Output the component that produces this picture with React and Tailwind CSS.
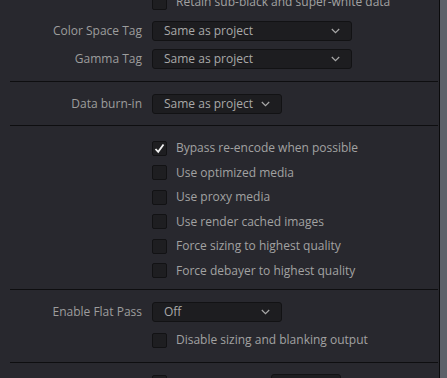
import React from "react";

const font = { fontFamily: '"Open Sans", "Noto Sans", sans-serif' };

function Chevron() {
  return (
    <svg width="9" height="6" viewBox="0 0 9 6" className="shrink-0">
      <path d="M0.8 1 L4.5 4.6 L8.2 1" fill="none" stroke="#a8a8a8" strokeWidth="1.2" />
    </svg>
  );
}

function Dropdown({ value, wide }) {
  return (
    <div
      className={`flex items-center justify-between h-[20px] pl-[11px] pr-[11px] rounded-[3px] border border-[#121214] bg-[#1d1d20] text-[#a9a9a9] text-[12px] ${
        wide ? "w-[200px]" : "w-[130px]"
      }`}
    >
      <span className="leading-none">{value}</span>
      <Chevron />
    </div>
  );
}

function Box({ checked }) {
  return (
    <div className="w-[15px] h-[15px] shrink-0 rounded-[2px] border border-[#121214] bg-[#1e1e21] flex items-center justify-center">
      {checked && (
        <svg width="11" height="11" viewBox="0 0 11 11">
          <path d="M1.5 6 L4.2 8.8 L9.5 1.5" fill="none" stroke="#f2f2f2" strokeWidth="1.8" />
        </svg>
      )}
    </div>
  );
}

function FieldRow({ label, children, h = "h-[28px]" }) {
  return (
    <div className={`flex items-center ${h}`}>
      <div className="w-[142px] pr-0 text-right text-[12px] text-[#9d9d9d] shrink-0">{label}</div>
      <div className="ml-[10px]">{children}</div>
    </div>
  );
}

function CheckRow({ label, checked, h = "h-[24.5px]" }) {
  return (
    <div className={`flex items-center ${h} pl-[152px]`}>
      <Box checked={checked} />
      <span className="ml-[9px] text-[12px] text-[#a2a2a2]">{label}</span>
    </div>
  );
}

function Divider() {
  return <div className="ml-[10px] w-[428px] h-px bg-[#0e0e10]" />;
}

export default function App() {
  const checks = [
    { label: "Bypass re-encode when possible", checked: true },
    { label: "Use optimized media" },
    { label: "Use proxy media" },
    { label: "Use render cached images" },
    { label: "Force sizing to highest quality" },
    { label: "Force debayer to highest quality" },
  ];

  return (
    <div className="w-[447px] h-[378px] overflow-hidden flex bg-[#28282e]" style={font}>
      <div className="w-[439px] h-full overflow-hidden">
        <div className="-mt-[10px]">
          <CheckRow label="Retain sub-black and super-white data" h="h-[24px]" />
          <div className="h-[3px]" />
          <FieldRow label="Color Space Tag">
            <Dropdown value="Same as project" wide />
          </FieldRow>
          <FieldRow label="Gamma Tag">
            <Dropdown value="Same as project" wide />
          </FieldRow>
          <div className="h-[8px]" />
        </div>
        <Divider />
        <FieldRow label="Data burn-in" h="h-[43px]">
          <Dropdown value="Same as project" />
        </FieldRow>
        <Divider />
        <div className="pt-[10px] pb-[6px]">
          {checks.map((c) => (
            <CheckRow key={c.label} label={c.label} checked={c.checked} />
          ))}
        </div>
        <Divider />
        <div className="pt-[8px] pb-[8px]">
          <FieldRow label="Enable Flat Pass">
            <Dropdown value="Off" />
          </FieldRow>
          <CheckRow label="Disable sizing and blanking output" h="h-[28px]" />
        </div>
        <Divider />
        <div className="pt-[12px] flex items-start pl-[152px]">
          <Box />
          <div className="ml-[104px] -mt-[1px] w-[70px] h-[20px] rounded-[3px] border border-[#121214] bg-[#1d1d20]" />
        </div>
      </div>
      <div className="w-px h-full bg-[#0b0b0c]" />
      <div className="flex-1 h-full bg-[#5d6169]" />
    </div>
  );
}
